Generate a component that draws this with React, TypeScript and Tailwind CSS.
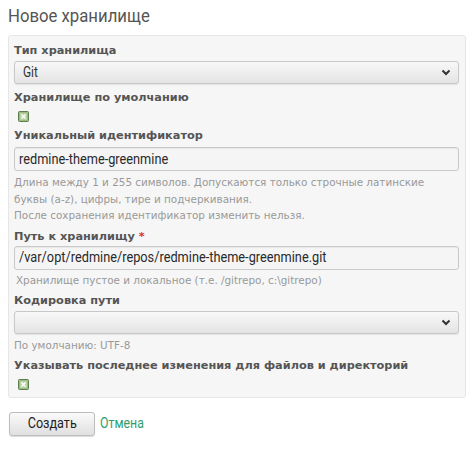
import React from "react";

const NARROW = "font-['Roboto',sans-serif]";
const SQ = "inline-block origin-left scale-x-[0.85] whitespace-nowrap";

const Check = () => (
  <svg width="11" height="11" viewBox="0 0 11 11" className="block">
    <rect x="0.5" y="0.5" width="10" height="10" rx="1" fill="#9dbb86" stroke="#5e7d4c" />
    <rect x="2" y="2" width="7" height="7" fill="#b9d3a6" />
    <path d="M3.5 3.5 L7.5 7.5 M7.5 3.5 L3.5 7.5" stroke="#ffffff" strokeWidth="1.4" />
  </svg>
);

const Chevron = () => (
  <svg width="10" height="7" viewBox="0 0 10 7" className="block">
    <path d="M1.5 1.5 L5 5 L8.5 1.5" stroke="#333" strokeWidth="2" fill="none" />
  </svg>
);

const Select = ({ value }: { value: string }) => (
  <div className={`h-[23px] flex items-center justify-between rounded-[3px] border border-[#c8c8c8] bg-gradient-to-b from-[#f8f8f8] to-[#e4e4e4] pl-[8px] pr-[7px] text-[14px] text-[#333] shadow-[0_1px_1px_rgba(0,0,0,0.08)] ${NARROW}`}>
    <span className={SQ}>{value}</span>
    <Chevron />
  </div>
);

const Input = ({ value }: { value: string }) => (
  <div className={`h-[24px] flex items-center rounded-[3px] border border-[#c9c9c9] bg-[#f5f5f5] pl-[4px] text-[15px] text-[#2a2a2a] shadow-[inset_0_1px_1px_rgba(0,0,0,0.06)] ${NARROW}`}>
    <span className={SQ}>{value}</span>
  </div>
);

const Label = ({ children }: { children: React.ReactNode }) => (
  <div className="text-[11.3px] font-bold text-[#555] leading-[16px] font-['DejaVu_Sans',sans-serif]">{children}</div>
);

const Hint = ({ children }: { children: React.ReactNode }) => (
  <div className="text-[10.4px] text-[#999] leading-[16.5px] font-['DejaVu_Sans',sans-serif]">{children}</div>
);

export default function App() {
  return (
    <div className="w-[474px] h-[457px] bg-white pl-[8px] pr-[8px] pt-[3px]">
      <h2 className={`text-[19px] text-[#555] leading-[26px] ${NARROW}`}><span className="inline-block origin-left scale-x-[0.88] whitespace-nowrap">Новое хранилище</span></h2>
      <div className="mt-[6px] w-[458px] rounded-[3px] border border-[#e6e6e6] bg-[#f6f6f6] pl-[5px] pr-[6px] pt-[7px] pb-[7px]">
        <Label>Тип хранилища</Label>
        <div className="mt-[2px]"><Select value="Git" /></div>
        <div className="mt-[6px]"><Label>Хранилище по умолчанию</Label></div>
        <div className="mt-[5px] pl-[4px]"><Check /></div>
        <div className="mt-[6px]"><Label>Уникальный идентификатор</Label></div>
        <div className="mt-[3px]"><Input value="redmine-theme-greenmine" /></div>
        <div className="mt-[3px]">
          <Hint>Длина между 1 и 255 символов. Допускаются только строчные латинские<br />буквы (a-z), цифры, тире и подчеркивания.<br />После сохранения идентификатор изменить нельзя.</Hint>
        </div>
        <div className="mt-[5px]"><Label>Путь к хранилищу <span className="text-[#dd3333]">*</span></Label></div>
        <div className="mt-[1px]"><Input value="/var/opt/redmine/repos/redmine-theme-greenmine.git" /></div>
        <div className="mt-[2px] pl-[2px]"><Hint>Хранилище пустое и локальное (т.е. /gitrepo, c:\gitrepo)</Hint></div>
        <div className="mt-[5px]"><Label>Кодировка пути</Label></div>
        <div className="mt-[2px]"><Select value="" /></div>
        <div className="mt-[3px]"><Hint>По умолчанию: UTF-8</Hint></div>
        <div className="mt-[4px]"><Label>Указывать последнее изменения для файлов и директорий</Label></div>
        <div className="mt-[5px] pl-[4px]"><Check /></div>
      </div>
      <div className="mt-[14px] flex items-center gap-[5px] pl-[1px]">
        <div className={`w-[86px] h-[24px] flex items-center justify-center rounded-[3px] border border-[#bdbdbd] bg-gradient-to-b from-[#fafafa] to-[#e0e0e0] text-[14px] text-[#222] shadow-[0_1px_1px_rgba(0,0,0,0.15)] ${NARROW}`}><span className="inline-block scale-x-[0.9]">Создать</span></div>
        <span className={`text-[14.5px] text-[#2f9e6e] ${NARROW}`}><span className={SQ}>Отмена</span></span>
      </div>
    </div>
  );
}
